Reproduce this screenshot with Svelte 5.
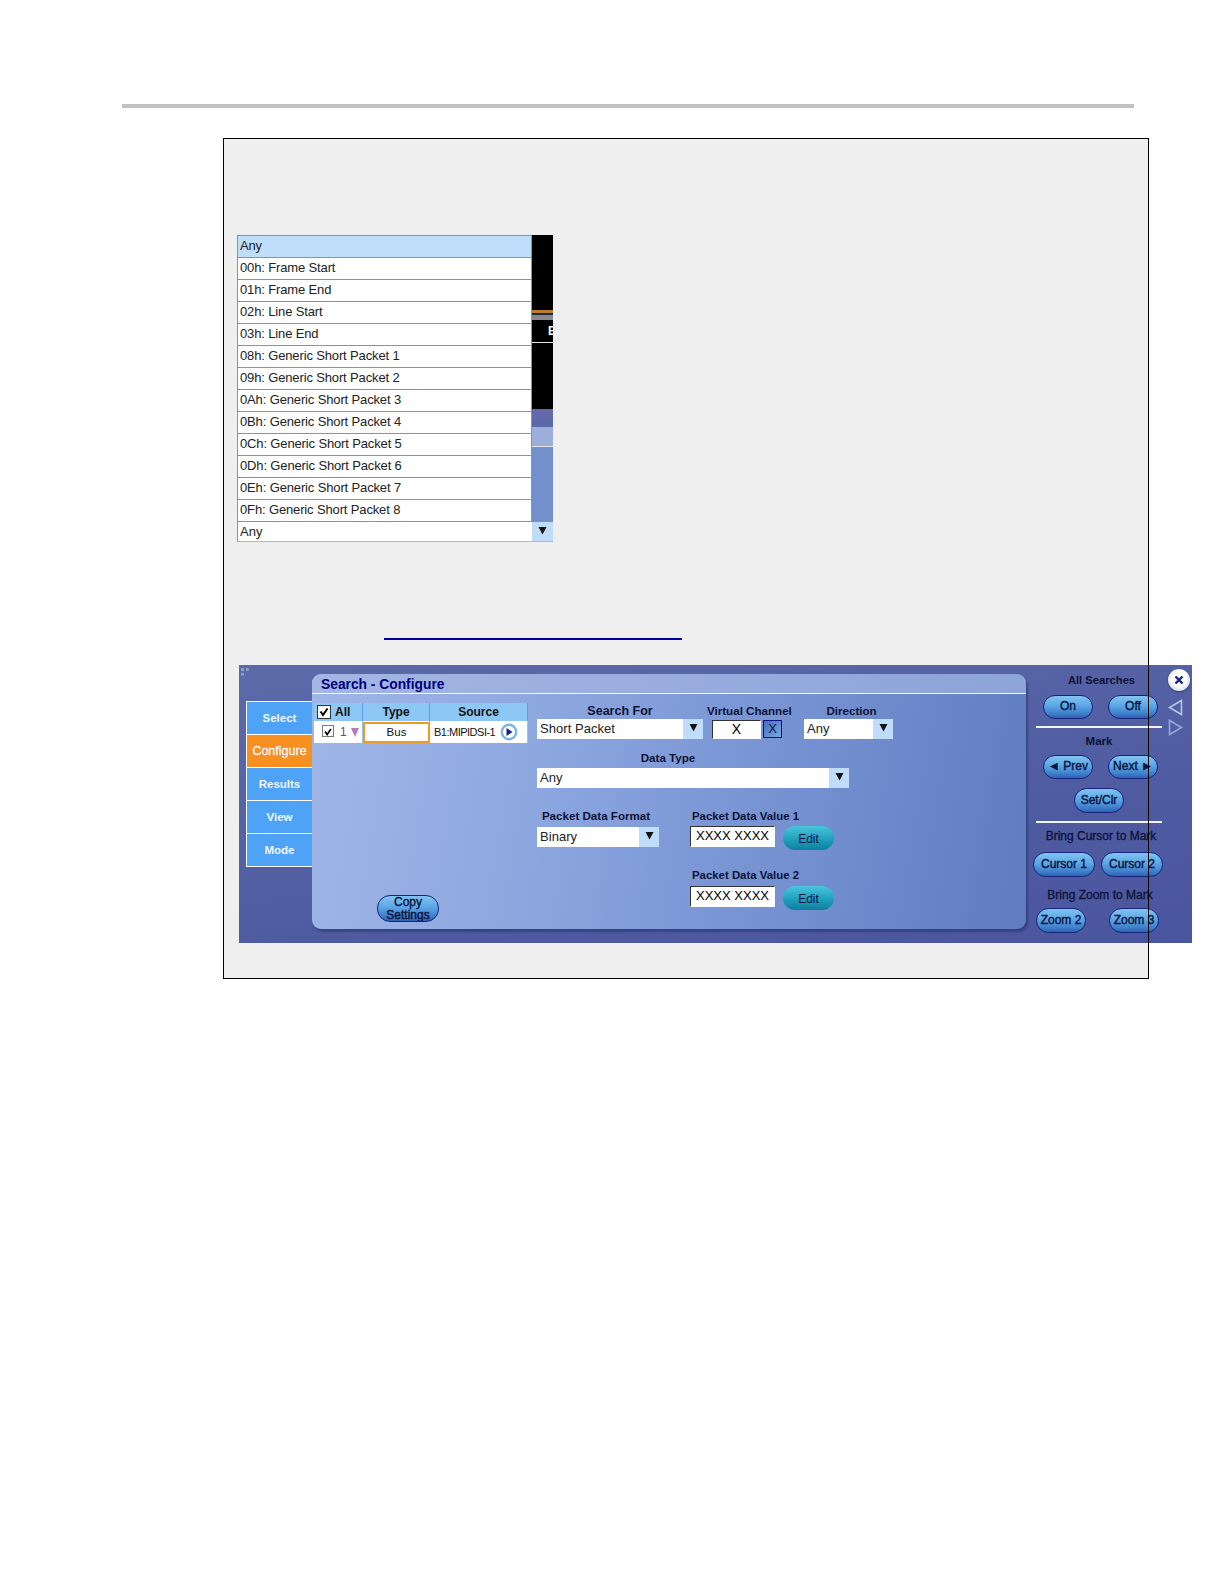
<script>
  const options = [
    '00h: Frame Start',
    '01h: Frame End',
    '02h: Line Start',
    '03h: Line End',
    '08h: Generic Short Packet 1',
    '09h: Generic Short Packet 2',
    '0Ah: Generic Short Packet 3',
    '0Bh: Generic Short Packet 4',
    '0Ch: Generic Short Packet 5',
    '0Dh: Generic Short Packet 6',
    '0Eh: Generic Short Packet 7',
    '0Fh: Generic Short Packet 8'
  ];

  const tabs = ['Select', 'Configure', 'Results', 'View', 'Mode'];
</script>

{#snippet dropdown(text, cls)}
  <div class="select {cls}">
    <span class="select-text">{text}</span>
    <span class="select-btn">
      <svg width="9" height="9" viewBox="0 0 9 9"><path d="M0.5 1 H8.5 L4.5 8.5 Z" fill="#111" /></svg>
    </span>
  </div>
{/snippet}

{#snippet check()}
  <svg width="100%" height="100%" viewBox="0 0 12 12"><path d="M2.5 5.5 L5 9 L9.5 2.5" fill="none" stroke="#000" stroke-width="2" /></svg>
{/snippet}

<div class="page">
  <div class="rule"></div>

  <div class="box">
    <div class="list">
      <div class="list-top">
        <div class="options">
          <div class="option selected">Any</div>
          {#each options as option}
            <div class="option">{option}</div>
          {/each}
        </div>
        <div class="strip">
          <div class="band black-a"></div>
          <div class="band orange"></div>
          <div class="band black-b"></div>
          <div class="band grey"></div>
          <div class="band black-c"><span class="strip-e">E</span></div>
          <div class="band white"></div>
          <div class="band black-d"></div>
          <div class="band blue-a"></div>
          <div class="band blue-b"></div>
          <div class="band blue-c"></div>
          <div class="band white"></div>
          <div class="band blue-d"></div>
        </div>
      </div>
      {@render dropdown('Any', 'list-select')}
    </div>

    <div class="link-line"></div>

    <div class="panel">
      <div class="grip"></div>

      <div class="tabs">
        {#each tabs as tab}
          <div class="tab" class:active={tab === 'Configure'}>{tab}</div>
        {/each}
      </div>

      <div class="card">
        <div class="card-title">Search - Configure</div>
        <div class="card-body">
          <div class="left">
            <div class="table">
              <div class="th col-a">
                <span class="cb cb-all">{@render check()}</span>
                <span>All</span>
              </div>
              <div class="th col-b">Type</div>
              <div class="th col-c">Source</div>
              <div class="td col-a">
                <span class="cb cb-row">{@render check()}</span>
                <span class="num">1</span>
                <svg width="8" height="9" viewBox="0 0 8 9"><path d="M0 0 H8 L4 9 Z" fill="#b57abb" /></svg>
              </div>
              <div class="td col-b type-cell">Bus</div>
              <div class="td col-c source-cell">
                <span>B1:MIPIDSI-1</span>
                <svg class="go" width="18" height="18" viewBox="0 0 18 18">
                  <circle cx="9" cy="9" r="7.2" fill="#fff" stroke="#7db5e8" stroke-width="2.4" />
                  <path d="M6.5 5 L12.5 9 L6.5 13 Z" fill="#14248a" />
                </svg>
              </div>
            </div>
            <button class="pill copy">Copy<br />Settings</button>
          </div>

          <div class="form">
            <div class="form-row">
              <div class="field search-for">
                <div class="label big">Search For</div>
                {@render dropdown('Short Packet', '')}
              </div>
              <div class="field channel">
                <div class="label">Virtual Channel</div>
                <div class="channel-inputs">
                  <div class="input channel-input">X</div>
                  <div class="x-btn">X</div>
                </div>
              </div>
              <div class="field direction">
                <div class="label">Direction</div>
                {@render dropdown('Any', '')}
              </div>
            </div>

            <div class="field data-type">
              <div class="label">Data Type</div>
              {@render dropdown('Any', '')}
            </div>

            <div class="form-row packet-row">
              <div class="field format">
                <div class="label">Packet Data Format</div>
                {@render dropdown('Binary', '')}
              </div>
              <div class="values">
                <div class="label value-label">Packet Data Value 1</div>
                <div class="value-row first">
                  <div class="input value-input">XXXX XXXX</div>
                  <button class="edit">Edit</button>
                </div>
                <div class="label value-label second">Packet Data Value 2</div>
                <div class="value-row">
                  <div class="input value-input">XXXX XXXX</div>
                  <button class="edit">Edit</button>
                </div>
              </div>
            </div>
          </div>
        </div>
      </div>

      <div class="side">
        <div class="side-label all-label">All Searches</div>
        <div class="pill-row r-on first-on">
          <button class="pill w50">On</button>
          <button class="pill w50">Off</button>
        </div>
        <div class="side-line"></div>
        <div class="side-label mark-label">Mark</div>
        <div class="pill-row r-on">
          <button class="pill w50">◄ Prev</button>
          <button class="pill w50">Next ►</button>
        </div>
        <div class="pill-row r-set">
          <button class="pill w50">Set/Clr</button>
        </div>
        <div class="side-line l2"></div>
        <div class="side-label cursor-label">Bring Cursor to Mark</div>
        <div class="pill-row r-cursor">
          <button class="pill w62">Cursor 1</button>
          <button class="pill w62">Cursor 2</button>
        </div>
        <div class="side-label zoom-label">Bring Zoom to Mark</div>
        <div class="pill-row r-zoom">
          <button class="pill w50">Zoom 2</button>
          <button class="pill w50">Zoom 3</button>
        </div>
      </div>

      <div class="controls">
        <div class="close">
          <svg width="12" height="12" viewBox="0 0 12 12"><path d="M2.5 2.5 L9.5 9.5 M9.5 2.5 L2.5 9.5" stroke="#14248a" stroke-width="2.4" /></svg>
        </div>
        <svg class="tri" width="15" height="17" viewBox="0 0 15 17"><path d="M13.5 1.5 V15.5 L1.5 8.5 Z" fill="none" stroke="#b7c6ea" stroke-width="1.6" /></svg>
        <svg class="tri" width="15" height="17" viewBox="0 0 15 17"><path d="M1.5 1.5 V15.5 L13.5 8.5 Z" fill="none" stroke="#94a8dc" stroke-width="1.6" /></svg>
      </div>
    </div>
  </div>
</div>

<style>
  :global(body) {
    margin: 0;
    background: #fff;
  }

  .page {
    height: 1584px;
    padding-top: 104px;
    box-sizing: border-box;
    font-family: "Liberation Sans", Arial, sans-serif;
    color: #111;
  }

  .rule {
    height: 4px;
    width: 1012px;
    margin-left: 122px;
    background: #c2c2c2;
  }

  .box {
    position: relative;
    width: 926px;
    height: 841px;
    margin: 30px 0 0 223px;
    box-sizing: border-box;
    padding: 97px 0 0 15px;
    background: #efefef;
  }

  /* border sits above the panel, which runs past the box on the right */
  .box::after {
    content: '';
    position: absolute;
    inset: 0;
    border: 1.5px solid #000;
    pointer-events: none;
  }

  /* type list */
  .list {
    width: 316px;
    margin-left: -1px;
  }

  .list-top {
    display: flex;
  }

  .options {
    width: 295px;
    box-sizing: border-box;
    border-left: 1px solid #5b9fe3;
    border-top: 1px solid #5b9fe3;
  }

  .option {
    height: 22px;
    box-sizing: border-box;
    padding: 2px 0 0 2px;
    background: #fff;
    border-bottom: 1px solid #5b9fe3;
    border-right: 1px solid #5b9fe3;
    font-size: 13px;
    line-height: 16px;
    letter-spacing: -0.14px;
    color: #222;
  }

  .option.selected {
    background: #bfdefb;
  }

  .strip {
    width: 21px;
    display: flex;
    flex-direction: column;
  }

  .band {
    flex: none;
    overflow: hidden;
  }

  .black-a { height: 75px; background: #000; }
  .orange { height: 3px; background: #b97f2d; }
  .black-b { height: 2px; background: #1c2c50; }
  .grey { height: 5px; background: #8a8a8a; }
  .black-c { height: 22px; background: #000; }
  .white { height: 1px; background: #e8e8e8; }
  .black-d { height: 66px; background: #000; }
  .blue-a { height: 11px; background: #6469ab; }
  .blue-b { height: 7px; background: #5c69a9; }
  .blue-c { height: 19px; background: #9eaedb; }
  .blue-d { flex: 1; background: #7390cd; }

  .strip-e {
    display: block;
    margin: 4px 0 0 16px;
    color: #fff;
    font-size: 12px;
    font-weight: 700;
    line-height: 14px;
  }

  /* dropdown */
  .select {
    display: flex;
    height: 20px;
    background: #fff;
    font-size: 13px;
    color: #222;
  }

  .select-text {
    flex: 1;
    padding: 2px 0 0 3px;
    line-height: 16px;
    letter-spacing: 0.05px;
  }

  .select-btn {
    flex: none;
    width: 20px;
    display: flex;
    align-items: center;
    justify-content: center;
    background: #bfdcfb;
    padding-bottom: 3px;
    box-sizing: border-box;
  }

  .list-select {
    box-sizing: border-box;
    border: 1px solid #8fc0ee;
    border-top: 0;
    border-right: 0;
    height: 20px;
    border-left-color: #5b9fe3;
  }

  .list-select .select-text {
    padding-left: 2px;
  }

  .list-select .select-btn {
    width: 21px;
  }

  .link-line {
    width: 298px;
    height: 1.5px;
    margin: 96px 0 0 146px;
    background: #0000a0;
  }

  /* search panel */
  .panel {
    position: relative;
    display: flex;
    width: 953px;
    height: 278px;
    margin-top: 25px;
    margin-left: 1px;
    box-sizing: border-box;
    padding-left: 7px;
    background: linear-gradient(170deg, #5c6aa9 0%, #4e5aa0 70%, #4a559f 100%);
  }

  .grip {
    position: absolute;
    left: 2px;
    top: 3px;
    width: 8px;
    height: 8px;
    border-left: 3px dotted #8f9cc9;
    border-top: 3px dotted #8f9cc9;
    box-sizing: border-box;
  }

  .tabs {
    flex: none;
    width: 66px;
    height: 166px;
    margin-top: 36px;
    box-sizing: border-box;
    border: 1.5px solid #fff;
    border-right: 0;
    display: flex;
    flex-direction: column;
  }

  .tab {
    flex: 1;
    display: flex;
    align-items: center;
    justify-content: center;
    background: #4ea3f7;
    color: #f2f6ff;
    font-size: 11.5px;
    font-weight: 700;
    border-bottom: 1px solid #fff;
  }

  .tab:last-child {
    border-bottom: 0;
  }

  .tab.active {
    background: #f7901e;
    font-weight: 400;
    font-size: 12.5px;
    -webkit-text-stroke: 0.3px #f2f6ff;
  }

  .card {
    flex: none;
    width: 714px;
    height: 255px;
    margin-top: 9px;
    box-sizing: border-box;
    border-radius: 9px;
    overflow: hidden;
    background: linear-gradient(100deg, #a0b6e6 0%, #8ea8e0 30%, #7c98d6 55%, #5f7cc0 100%);
    box-shadow: 2px 3px 2px rgba(40, 50, 110, 0.55);
  }

  .card-title {
    height: 20px;
    box-sizing: border-box;
    padding: 3px 0 0 9px;
    border-bottom: 1.5px solid #f4f7ff;
    background: linear-gradient(90deg, #a3b6e4, #8da4d8);
    color: #000080;
    font-size: 13.8px;
    font-weight: 700;
    line-height: 16px;
  }

  .card-body {
    display: flex;
  }

  .left {
    flex: none;
    width: 214px;
    margin: 9px 0 0 2px;
  }

  .table {
    display: grid;
    grid-template-columns: 49px 67px 98px;
    grid-template-rows: 19px 21px;
    font-size: 12px;
  }

  .th {
    display: flex;
    align-items: center;
    justify-content: center;
    background: #8cc7f5;
    font-weight: 700;
    color: #111;
    border-right: 1px solid #5f9fe0;
    border-bottom: 1px solid #fff;
    box-sizing: border-box;
  }

  .th.col-a {
    justify-content: flex-start;
    padding-left: 3px;
    gap: 4px;
  }

  .td {
    display: flex;
    align-items: center;
    background: #fff;
    box-sizing: border-box;
    border-right: 1px solid #8cc7f5;
  }

  .td.col-a {
    padding-left: 8px;
    gap: 6px;
    font-size: 12px;
    color: #7a3f82;
  }

  .num {
    margin-right: -2px;
  }

  .cb {
    display: block;
    box-sizing: border-box;
    background: #fff;
  }

  .cb-all {
    width: 14px;
    height: 14px;
    border: 1.5px solid #333;
  }

  .cb-row {
    width: 12px;
    height: 12px;
    margin-top: -2px;
    border: 1px solid #777;
  }

  .type-cell {
    justify-content: center;
    border: 2px solid #f29a1f;
    font-size: 11.5px;
  }

  .source-cell {
    padding-left: 4px;
    gap: 5px;
  }

  .source-cell span {
    white-space: nowrap;
    font-size: 11px;
    letter-spacing: -0.5px;
  }

  .go {
    flex: none;
  }

  /* buttons */
  .pill {
    display: block;
    height: 25px;
    padding: 0;
    box-sizing: border-box;
    border: 1.5px solid #14247e;
    border-radius: 13px;
    background: linear-gradient(180deg, #82c4f0 0%, #5ba6e6 45%, #3f80cc 80%, #2f62b0 100%);
    color: #0a1440;
    font-family: inherit;
    font-size: 12px;
    font-weight: 400;
    -webkit-text-stroke: 0.4px #0a1440;
    line-height: 13px;
    white-space: nowrap;
  }

  .copy {
    width: 62px;
    height: 27px;
    margin: 152px 0 0 63px;
    overflow: hidden;
    line-height: 13px;
  }

  .w50 { width: 50px; }
  .w62 { width: 62px; }

  .form {
    flex: none;
    margin: -1px 0 0 9px;
    width: 360px;
  }

  .form-row {
    display: flex;
  }

  .field {
    flex: none;
  }

  .label {
    height: 18px;
    box-sizing: border-box;
    padding-top: 3px;
    text-align: center;
    font-size: 11.6px;
    font-weight: 700;
    line-height: 14px;
    color: #0c1236;
    white-space: nowrap;
  }

  .label.big {
    font-size: 12.5px;
  }

  .search-for { width: 166px; margin-top: 8px; }
  .channel { width: 82px; margin: 8px 0 0 4px; }
  .direction { width: 89px; margin: 8px 0 0 15px; }

  .direction .label {
    padding-left: 6px;
  }

  .channel-inputs {
    display: flex;
    gap: 2px;
    margin: 1px 0 0 5px;
  }

  .input {
    box-sizing: border-box;
    background: #fff;
    border: 1.5px solid #fff;
    border-top-color: #333;
    border-left-color: #333;
    color: #000;
    text-align: center;
  }

  .channel-input {
    width: 49px;
    height: 19px;
    font-size: 14px;
    line-height: 17px;
  }

  .x-btn {
    width: 19px;
    height: 18px;
    box-sizing: border-box;
    border: 1.5px solid #10108a;
    background: linear-gradient(135deg, #3f6fc0, #7fa8e0);
    color: #0a1440;
    font-size: 13px;
    line-height: 16px;
    text-align: center;
  }

  .data-type {
    width: 312px;
    margin-top: 11px;
  }

  .data-type .label {
    padding: 1px 50px 0 0;
  }

  .packet-row {
    margin-top: 21px;
  }

  .format {
    width: 122px;
  }

  .format .label {
    padding-top: 0;
    margin-right: 4px;
  }

  .values {
    margin-left: 31px;
  }

  .value-label {
    text-align: left;
    padding: 0 0 0 2px;
    font-size: 11.4px;
  }

  .value-label.second {
    margin-top: 18px;
  }

  .value-row {
    display: flex;
    gap: 8px;
    height: 24px;
  }

  .value-row.first {
    margin-top: -1px;
  }

  .value-input {
    width: 85px;
    height: 21px;
    font-size: 13px;
    line-height: 18px;
    white-space: nowrap;
  }

  .edit {
    width: 51px;
    height: 24px;
    padding: 3px 0 0;
    border: 0;
    border-radius: 12px;
    background: linear-gradient(180deg, #49c5dc 0%, #1fa0bd 55%, #0d7f9e 100%);
    color: #0a1440;
    font-family: inherit;
    font-size: 12px;
  }

  /* right column */
  .side {
    flex: none;
    width: 142px;
    display: flex;
    flex-direction: column;
  }

  .side-label {
    font-size: 12px;
    line-height: 14px;
    color: #0c1236;
    white-space: nowrap;
    text-align: center;
    -webkit-text-stroke: 0.3px #0c1236;
  }

  .all-label { margin: 8px 0 0 9px; font-size: 11.2px; font-weight: 700; -webkit-text-stroke: 0; }
  .mark-label { margin: 6px 0 0 4px; font-size: 11.5px; font-weight: 700; -webkit-text-stroke: 0; }
  .cursor-label { margin: 6px 0 0 8px; }
  .zoom-label { margin: 11px 0 0 6px; }

  .pill-row {
    display: flex;
  }

  .r-on { margin: 7px 0 0 17px; gap: 15px; }
  .r-on .pill { height: 24px; }
  .first-on { margin-top: 8px; }
  .r-set { margin: 9px 0 0 48px; }
  .r-cursor { margin: 9px 0 0 7px; gap: 6px; }
  .r-zoom { margin: 6px 0 0 10px; gap: 23px; }

  .side-line {
    height: 2px;
    width: 126px;
    margin: 7px 0 0 10px;
    background: #f2f4fb;
  }

  .side-line.l2 {
    margin-top: 8px;
  }

  .controls {
    flex: none;
    width: 24px;
    display: flex;
    flex-direction: column;
    align-items: flex-start;
    padding-top: 4px;
  }

  .close {
    width: 22px;
    height: 22px;
    box-sizing: border-box;
    display: flex;
    align-items: center;
    justify-content: center;
    border-radius: 50%;
    background: radial-gradient(circle at 50% 45%, #fff 45%, #b9c0da 100%);
    box-shadow: 0 1px 2px rgba(20, 30, 80, 0.6);
  }

  .tri {
    margin-top: 3px;
  }

  .close + .tri {
    margin-top: 8px;
  }
</style>
